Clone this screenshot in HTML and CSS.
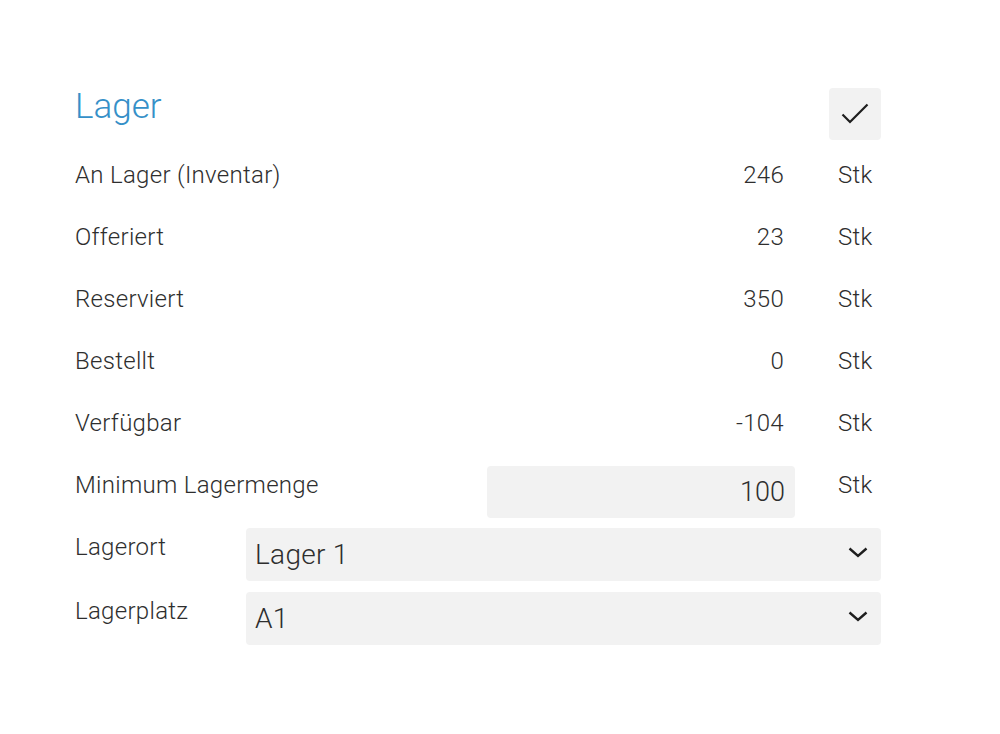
FILE: index.html
```html
<!DOCTYPE html>
<html lang="de">
<head>
<meta charset="utf-8">
<title>Lager</title>
<link rel="stylesheet" href="styles.css">
</head>
<body>
<div class="panel">
  <div class="head">
    <h1 class="title">Lager</h1>
    <button class="check" type="button" aria-label="Bestätigen">
      <svg width="30" height="24" viewBox="0 0 30 24"><path d="M2.5 12.5 L10 20 L27.5 2.5" fill="none" stroke="#1e1e1e" stroke-width="2.2"/></svg>
    </button>
  </div>
  <div class="row"><div class="label">An Lager (Inventar)</div><div class="value">246</div><div class="unit">Stk</div></div>
  <div class="row"><div class="label">Offeriert</div><div class="value">23</div><div class="unit">Stk</div></div>
  <div class="row"><div class="label">Reserviert</div><div class="value">350</div><div class="unit">Stk</div></div>
  <div class="row"><div class="label">Bestellt</div><div class="value">0</div><div class="unit">Stk</div></div>
  <div class="row"><div class="label">Verfügbar</div><div class="value">-104</div><div class="unit">Stk</div></div>
  <div class="row"><div class="label">Minimum Lagermenge</div><div class="value input">100</div><div class="unit">Stk</div></div>
  <div class="row srow"><div class="label slabel">Lagerort</div><div class="select"><span>Lager 1</span><svg class="chev" width="20" height="11" viewBox="0 0 20 11"><path d="M1.5 1.5 L10 9 L18.5 1.5" fill="none" stroke="#1e1e1e" stroke-width="2.4"/></svg></div></div>
  <div class="row srow"><div class="label slabel">Lagerplatz</div><div class="select"><span>A1</span><svg class="chev" width="20" height="11" viewBox="0 0 20 11"><path d="M1.5 1.5 L10 9 L18.5 1.5" fill="none" stroke="#1e1e1e" stroke-width="2.4"/></svg></div></div>
</div>
</body>
</html>
```
FILE: styles.css
```css
html, body {
  margin: 0;
  padding: 0;
  background: #ffffff;
}
body {
  font-family: Roboto, "Liberation Sans", sans-serif;
  font-weight: 300;
  color: #2e2e2e;
}
.panel {
  width: 806px;
  padding: 88px 0 0 75px;
  display: flex;
  flex-direction: column;
}
.head {
  display: flex;
  justify-content: space-between;
  align-items: flex-start;
  height: 52px;
  margin-bottom: 16px;
}
.title {
  margin: 0;
  font-size: 35px;
  font-weight: 300;
  line-height: 38px;
  color: #3590c8;
}
.check {
  width: 52px;
  height: 52px;
  border: 0;
  border-radius: 4px;
  background: #f2f2f2;
  display: flex;
  align-items: center;
  justify-content: center;
  padding: 0;
}
.row {
  display: flex;
  height: 52px;
  margin-bottom: 10px;
  font-size: 24px;
  letter-spacing: 0.3px;
  line-height: 30px;
}
.label {
  flex: 1;
  padding-top: 4px;
}
.value {
  width: 308px;
  box-sizing: border-box;
  text-align: right;
  padding: 4px 11px 0 0;
}
.value.input {
  background: #f2f2f2;
  border-radius: 4px;
  font-size: 27px;
  letter-spacing: 0;
  line-height: 52px;
  padding: 0 10px 0 0;
}
.unit {
  width: 86px;
  box-sizing: border-box;
  padding: 4px 0 0 43px;
}
.srow {
  height: 53px;
  margin-bottom: 11px;
}
.slabel {
  flex: 0 0 171px;
}
.select {
  flex: 1;
  background: #f2f2f2;
  border-radius: 4px;
  display: flex;
  align-items: center;
  justify-content: space-between;
  padding: 0 13px 0 9px;
  font-size: 28px;
  letter-spacing: 0.3px;
  line-height: 53px;
}
.chev {
  margin-top: -5px;
}
```
